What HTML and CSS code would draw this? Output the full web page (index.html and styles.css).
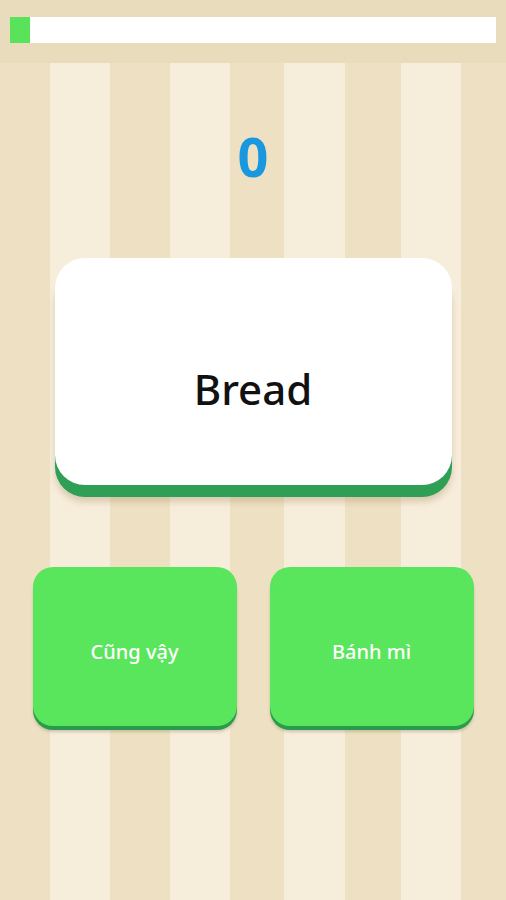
FILE: index.html
```html
<!DOCTYPE html>
<html lang="vi">
<head>
<meta charset="utf-8">
<title>Quiz</title>
<link rel="stylesheet" href="styles.css">
</head>
<body>
<div class="app">
  <header class="header">
    <div class="progress"><div class="progress-fill"></div></div>
  </header>
  <main class="main">
    <div class="score">0</div>
    <div class="card"><span class="word">Bread</span></div>
    <div class="answers">
      <button class="answer">Cũng vậy</button>
      <button class="answer">Bánh mì</button>
    </div>
  </main>
</div>
</body>
</html>
```
FILE: styles.css
```css
html, body {
  margin: 0;
  padding: 0;
}
body {
  width: 506px;
  height: 900px;
  overflow: hidden;
  font-family: "Open Sans", "Noto Sans", sans-serif;
}
.app {
  height: 900px;
  display: flex;
  flex-direction: column;
  background-color: #eee1c3;
  background-image: linear-gradient(90deg,
    #eee1c3 0, #eee1c3 50px,
    #f7eddb 50px, #f7eddb 110px,
    #eee1c3 110px, #eee1c3 170px,
    #f7eddb 170px, #f7eddb 230px,
    #eee1c3 230px, #eee1c3 284px,
    #f7eddb 284px, #f7eddb 345px,
    #eee1c3 345px, #eee1c3 401px,
    #f7eddb 401px, #f7eddb 461px,
    #eee1c3 461px, #eee1c3 506px);
}
.header {
  height: 63px;
  box-sizing: border-box;
  padding: 17px 10px 0;
  background: #e8dcbd;
}
.progress {
  height: 26px;
  background: #ffffff;
}
.progress-fill {
  width: 20px;
  height: 100%;
  background: #58e35a;
}
.main {
  display: flex;
  flex-direction: column;
  align-items: center;
}
.score {
  margin-top: 62px;
  font-size: 54px;
  line-height: 62px;
  font-weight: 700;
  color: #1a98df;
}
.card {
  margin-top: 71px;
  width: 397px;
  height: 227px;
  box-sizing: border-box;
  padding-top: 102px;
  background: #ffffff;
  border-radius: 30px;
  text-align: center;
  box-shadow: 0 12px 0 #2f9f55, 0 17px 6px rgba(160, 140, 100, 0.35);
}
.word {
  font-size: 42px;
  font-weight: 500;
  color: #111111;
  font-family: "Noto Sans", "Open Sans", sans-serif;
}
.answers {
  margin-top: 82px;
  width: 441px;
  display: grid;
  grid-template-columns: 1fr 1fr;
  gap: 33px;
}
.answer {
  height: 159px;
  border: none;
  border-radius: 20px;
  background: #5ae65c;
  color: #ffffff;
  font-family: "Noto Sans", "Open Sans", sans-serif;
  font-size: 20px;
  font-weight: 500;
  padding: 10px 0 0;
  box-shadow: 0 4px 0 #2a9a4c, 0 6px 3px rgba(120, 110, 70, 0.3);
}
```
